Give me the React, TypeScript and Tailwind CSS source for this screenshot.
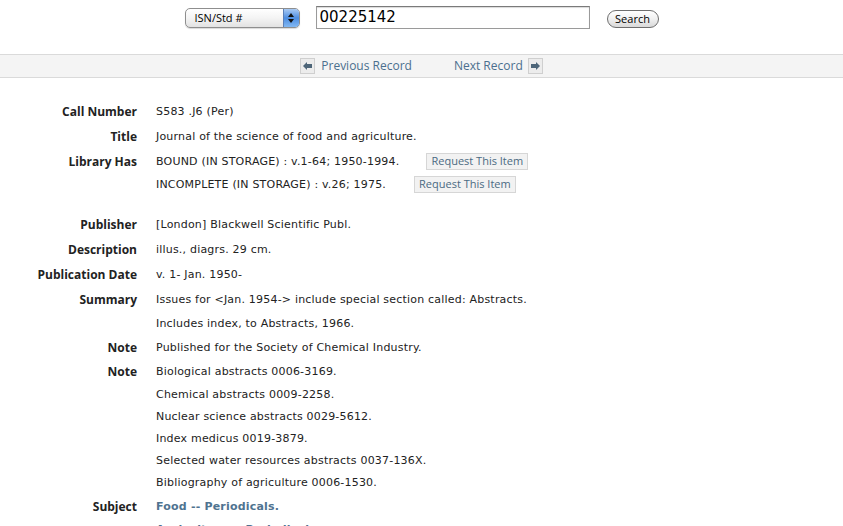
import type React from "react"

const ui = { fontFamily: '"Open Sans", "Liberation Sans", Arial, sans-serif' }
const body = { fontFamily: '"DejaVu Sans", Verdana, sans-serif' }

function ArrowBox({ dir }: { dir: "left" | "right" }) {
  return (
    <span className="inline-flex h-[16px] w-[15px] items-center justify-center border border-[#cfcfcf] bg-[#ececec]">
      <svg width="9" height="8" viewBox="0 0 9 8">
        {dir === "left" ? (
          <path d="M0 4 L4 0 L4 2 L9 2 L9 6 L4 6 L4 8 Z" fill="#4d6578" />
        ) : (
          <path d="M9 4 L5 0 L5 2 L0 2 L0 6 L5 6 L5 8 Z" fill="#4d6578" />
        )}
      </svg>
    </span>
  )
}

function RequestButton() {
  return (
    <span
      className="inline-flex h-[17px] items-center border border-[#d6d6d6] bg-[#f2f2f2] px-[4px] text-[11px] tracking-normal text-[#4b6a82]"
      style={ui}
    >
      Request This Item
    </span>
  )
}

// each line: [content, margin-top class]
type Line = [React.ReactNode, string]
type Row = { label: string; lines: Line[]; link?: boolean }

const rows: Row[] = [
  { label: "Call Number", lines: [["S583 .J6 (Per)", "mt-0"]] },
  { label: "Title", lines: [["Journal of the science of food and agriculture.", "mt-[3px]"]] },
  {
    label: "Library Has",
    lines: [
      [
        <span key="a" className="flex items-center">
          BOUND (IN STORAGE) : v.1-64; 1950-1994.
          <span className="ml-[27px]">
            <RequestButton />
          </span>
        </span>,
        "mt-[3px]",
      ],
      [
        <span key="b" className="flex items-center">
          INCOMPLETE (IN STORAGE) : v.26; 1975.
          <span className="ml-[28px]">
            <RequestButton />
          </span>
        </span>,
        "mt-[1px]",
      ],
    ],
  },
  { label: "Publisher", lines: [["[London] Blackwell Scientific Publ.", "mt-[18px]"]] },
  { label: "Description", lines: [["illus., diagrs. 29 cm.", "mt-[3px]"]] },
  { label: "Publication Date", lines: [["v. 1- Jan. 1950-", "mt-[3px]"]] },
  {
    label: "Summary",
    lines: [
      ["Issues for <Jan. 1954-> include special section called: Abstracts.", "mt-[3px]"],
      ["Includes index, to Abstracts, 1966.", "mt-[2px]"],
    ],
  },
  { label: "Note", lines: [["Published for the Society of Chemical Industry.", "mt-[2px]"]] },
  {
    label: "Note",
    lines: [
      ["Biological abstracts 0006-3169.", "mt-[2px]"],
      ["Chemical abstracts 0009-2258.", "mt-[1px]"],
      ["Nuclear science abstracts 0029-5612.", "mt-0"],
      ["Index medicus 0019-3879.", "mt-0"],
      ["Selected water resources abstracts 0037-136X.", "mt-0"],
      ["Bibliography of agriculture 0006-1530.", "mt-0"],
    ],
  },
  {
    label: "Subject",
    link: true,
    lines: [
      ["Food -- Periodicals.", "mt-[2px]"],
      ["Agriculture -- Periodicals.", "mt-[1px]"],
    ],
  },
]

export default function App() {
  return (
    <div className="h-[526px] w-[843px] overflow-hidden bg-white text-[12px] text-[#222]" style={ui}>
      <div className="flex h-[54px] items-start justify-center pt-[6px]">
        <div className="mt-[2px] flex h-[20px] w-[115px] items-center overflow-hidden rounded-[5px] border border-[#8e8e8e] bg-gradient-to-b from-white via-[#f4f4f4] to-[#e2e2e2] shadow-[0_1px_1px_rgba(0,0,0,0.15)]">
          <span className="flex-1 pl-[9px] text-[11px] text-black">ISN/Std #</span>
          <span className="flex h-full w-[16px] flex-col items-center justify-center gap-[2px] border-l border-[#5a7fb8] bg-gradient-to-b from-[#a9caf3] via-[#4d8de0] to-[#82b8f2]">
            <svg width="6" height="4" viewBox="0 0 6 4">
              <path d="M0 4 L3 0 L6 4 Z" fill="#111" />
            </svg>
            <svg width="6" height="4" viewBox="0 0 6 4">
              <path d="M0 0 L3 4 L6 0 Z" fill="#111" />
            </svg>
          </span>
        </div>
        <div
          className="ml-[16px] flex h-[23px] w-[274px] items-center border border-[#9a9a9a] border-t-[#7a7a7a] bg-white pl-[3px] text-[15px] text-black shadow-[inset_0_1px_1px_rgba(0,0,0,0.15)]"
          style={body}
        >
          00225142
        </div>
        <div className="ml-[17px] mt-[4px] flex h-[18px] w-[52px] items-center justify-center rounded-full border border-[#6e6e6e] bg-gradient-to-b from-white via-[#f0f0f0] to-[#d9d9d9] text-[11px] text-black">
          Search
        </div>
      </div>

      <div className="flex h-[24px] items-center justify-center border-y border-[#dadada] bg-[#f4f4f4] text-[12px] text-[#4b6f8e]">
        <span className="flex items-center">
          <ArrowBox dir="left" />
          <span className="ml-[6px]">Previous Record</span>
        </span>
        <span className="ml-[42px] flex items-center">
          <span className="mr-[5px]">Next Record</span>
          <ArrowBox dir="right" />
        </span>
      </div>

      <div className="pt-[23px]">
        {rows.map((row, i) => (
          <div key={i} className={`flex ${row.lines[0][1]}`}>
            <div className="w-[137px] shrink-0 text-right font-bold leading-[22px] text-[#222]">{row.label}</div>
            <div className="ml-[19px] flex flex-col text-[11px] tracking-[0.2px]" style={body}>
              {row.lines.map(([content, mt], j) => (
                <div
                  key={j}
                  className={`flex h-[22px] items-center ${j > 0 ? mt : ""} ${
                    row.link ? "font-bold text-[#4f7390]" : ""
                  }`}
                >
                  {content}
                </div>
              ))}
            </div>
          </div>
        ))}
      </div>
    </div>
  )
}
